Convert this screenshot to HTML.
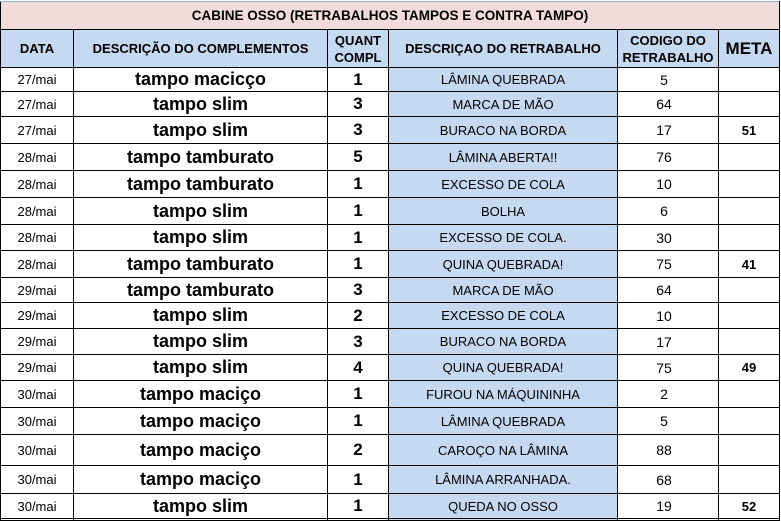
<!DOCTYPE html><html><head><style>
body{margin:0;width:781px;height:520px;overflow:hidden;background:#fff;font-family:"Liberation Sans",Arial,sans-serif}
table{position:absolute;left:0;top:1px;border-collapse:collapse;table-layout:fixed;width:779px}
td{border:1px solid #000;padding:0;text-align:center;overflow:hidden;white-space:nowrap;color:#000}
.t td{background:#f2dcdb;font-weight:bold;font-size:13.5px;border-top:1px solid #8db4e2}
.h td{background:#c5d9f1;font-weight:bold;font-size:13px;line-height:17px}
.d{font-size:13px}.n{font-weight:bold;font-size:18px}.q{font-weight:bold;font-size:17px}
.r{background:#c5d9f1;font-size:13px}.c{font-size:14px;padding-right:8px}.m{font-weight:bold;font-size:13px}
</style></head><body>
<table>
<colgroup><col style="width:73px"><col style="width:254px"><col style="width:61px"><col style="width:229px"><col style="width:101px"><col style="width:61px"></colgroup>
<tr class="t" style="height:28px"><td colspan="6">CABINE OSSO (RETRABALHOS TAMPOS E CONTRA TAMPO)</td></tr>
<tr class="h" style="height:38px"><td>DATA</td><td>DESCRIÇÃO DO COMPLEMENTOS</td><td>QUANT<br>COMPL</td><td>DESCRIÇAO DO RETRABALHO</td><td>CODIGO DO<br>RETRABALHO</td><td style="font-size:17px">META</td></tr>
<tr style="height:24px"><td class="d">27/mai</td><td class="n">tampo macicço</td><td class="q">1</td><td class="r">LÂMINA QUEBRADA</td><td class="c">5</td><td class="m"></td></tr>
<tr style="height:25px"><td class="d">27/mai</td><td class="n">tampo slim</td><td class="q">3</td><td class="r">MARCA DE MÃO</td><td class="c">64</td><td class="m"></td></tr>
<tr style="height:27px"><td class="d">27/mai</td><td class="n">tampo slim</td><td class="q">3</td><td class="r">BURACO NA BORDA</td><td class="c">17</td><td class="m">51</td></tr>
<tr style="height:27px"><td class="d">28/mai</td><td class="n">tampo tamburato</td><td class="q">5</td><td class="r">LÂMINA ABERTA!!</td><td class="c">76</td><td class="m"></td></tr>
<tr style="height:27px"><td class="d">28/mai</td><td class="n">tampo tamburato</td><td class="q">1</td><td class="r">EXCESSO DE COLA</td><td class="c">10</td><td class="m"></td></tr>
<tr style="height:27px"><td class="d">28/mai</td><td class="n">tampo slim</td><td class="q">1</td><td class="r">BOLHA</td><td class="c">6</td><td class="m"></td></tr>
<tr style="height:26px"><td class="d">28/mai</td><td class="n">tampo slim</td><td class="q">1</td><td class="r">EXCESSO DE COLA.</td><td class="c">30</td><td class="m"></td></tr>
<tr style="height:27px"><td class="d">28/mai</td><td class="n">tampo tamburato</td><td class="q">1</td><td class="r">QUINA QUEBRADA!</td><td class="c">75</td><td class="m">41</td></tr>
<tr style="height:25px"><td class="d">29/mai</td><td class="n">tampo tamburato</td><td class="q">3</td><td class="r">MARCA DE MÃO</td><td class="c">64</td><td class="m"></td></tr>
<tr style="height:26px"><td class="d">29/mai</td><td class="n">tampo slim</td><td class="q">2</td><td class="r">EXCESSO DE COLA</td><td class="c">10</td><td class="m"></td></tr>
<tr style="height:26px"><td class="d">29/mai</td><td class="n">tampo slim</td><td class="q">3</td><td class="r">BURACO NA BORDA</td><td class="c">17</td><td class="m"></td></tr>
<tr style="height:26px"><td class="d">29/mai</td><td class="n">tampo slim</td><td class="q">4</td><td class="r">QUINA QUEBRADA!</td><td class="c">75</td><td class="m">49</td></tr>
<tr style="height:27px"><td class="d">30/mai</td><td class="n">tampo maciço</td><td class="q">1</td><td class="r">FUROU NA MÁQUININHA</td><td class="c">2</td><td class="m"></td></tr>
<tr style="height:27px"><td class="d">30/mai</td><td class="n">tampo maciço</td><td class="q">1</td><td class="r">LÂMINA QUEBRADA</td><td class="c">5</td><td class="m"></td></tr>
<tr style="height:31px"><td class="d">30/mai</td><td class="n">tampo maciço</td><td class="q">2</td><td class="r">CAROÇO NA LÂMINA</td><td class="c">88</td><td class="m"></td></tr>
<tr style="height:28px"><td class="d">30/mai</td><td class="n">tampo maciço</td><td class="q">1</td><td class="r">LÂMINA ARRANHADA.</td><td class="c">68</td><td class="m"></td></tr>
<tr style="height:25px"><td class="d">30/mai</td><td class="n">tampo slim</td><td class="q">1</td><td class="r">QUEDA NO OSSO</td><td class="c">19</td><td class="m">52</td></tr>
<tr style="height:2px"><td></td><td></td><td></td><td class="r"></td><td></td><td></td></tr>
</table>
</body></html>
